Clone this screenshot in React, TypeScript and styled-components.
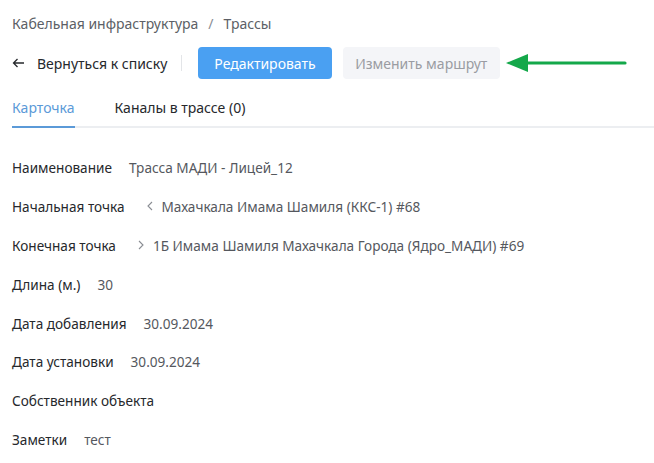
import React from "react";
import styled, { createGlobalStyle } from "styled-components";

const GlobalStyle = createGlobalStyle`
  html, body {
    margin: 0;
    padding: 0;
    background: #ffffff;
    font-family: "Noto Sans", "Open Sans", sans-serif;
  }
`;

const Page = styled.div`
  width: 654px;
  height: 463px;
  overflow: hidden;
  padding: 0 0 0 12px;
  box-sizing: border-box;
`;

const Breadcrumbs = styled.div`
  display: flex;
  align-items: center;
  gap: 10px;
  height: 47px;
  font-size: 14px;
  color: #5c5f66;
`;

const Slash = styled.span`
  color: #8a8d93;
`;

const Toolbar = styled.div`
  display: flex;
  align-items: center;
  height: 32px;
`;

const BackLink = styled.button`
  display: flex;
  align-items: center;
  gap: 12px;
  border: 0;
  background: none;
  padding: 0;
  font: inherit;
  font-size: 14px;
  color: #26282c;
  cursor: pointer;
`;

const Divider = styled.span`
  width: 1px;
  height: 16px;
  background: #e3e5e8;
  margin: 0 16px 0 14px;
`;

const Button = styled.button<{ $primary?: boolean }>`
  height: 32px;
  border: 0;
  border-radius: 4px;
  padding: 0 ${(p) => (p.$primary ? 16 : 12.5)}px;
  font: inherit;
  font-size: 14px;
  margin-right: ${(p) => (p.$primary ? 11 : 12)}px;
  background: ${(p) => (p.$primary ? "#4aa0f2" : "#f4f5f8")};
  color: ${(p) => (p.$primary ? "#ffffff" : "#9a9ca2")};
`;

const Pointer = styled.svg`
  display: block;
  margin-left: -6px;
`;

const Tabs = styled.div`
  display: flex;
  gap: 40px;
  margin-top: 16px;
  border-bottom: 2px solid #eceef1;
`;

const Tab = styled.div<{ $active?: boolean }>`
  font-size: 14px;
  padding: 3px 0 9px;
  margin-bottom: -2px;
  color: ${(p) => (p.$active ? "#5b9ad8" : "#26282c")};
  border-bottom: 2px solid ${(p) => (p.$active ? "#5b9ad8" : "transparent")};
`;

const Fields = styled.div`
  display: flex;
  flex-direction: column;
  padding-top: 20px;
`;

const Row = styled.div`
  display: flex;
  align-items: center;
  gap: 17px;
  height: 38.9px;
  font-size: 13.6px;
`;

const Label = styled.span`
  color: #26282c;
`;

const Value = styled.span`
  display: flex;
  align-items: center;
  gap: 9px;
  color: #55585e;
`;

const Chevron = styled.svg`
  display: block;
  margin-left: 5px;
`;

const fields: { label: string; value?: string; chevron?: "left" | "right" }[] = [
  { label: "Наименование", value: "Трасса МАДИ - Лицей_12" },
  { label: "Начальная точка", value: "Махачкала Имама Шамиля (ККС-1) #68", chevron: "left" },
  { label: "Конечная точка", value: "1Б Имама Шамиля Махачкала Города (Ядро_МАДИ) #69", chevron: "right" },
  { label: "Длина (м.)", value: "30" },
  { label: "Дата добавления", value: "30.09.2024" },
  { label: "Дата установки", value: "30.09.2024" },
  { label: "Собственник объекта" },
  { label: "Заметки", value: "тест" },
];

const App = () => (
  <Page>
    <GlobalStyle />
    <Breadcrumbs>
      <span>Кабельная инфраструктура</span>
      <Slash>/</Slash>
      <span>Трассы</span>
    </Breadcrumbs>
    <Toolbar>
      <BackLink>
        <svg width="13" height="10" viewBox="0 0 13 10" fill="none">
          <path d="M12 5H1.5M5.5 1L1.5 5l4 4" stroke="#26282c" strokeWidth="1.3" />
        </svg>
        Вернуться к списку
      </BackLink>
      <Divider />
      <Button $primary>Редактировать</Button>
      <Button>Изменить маршрут</Button>
      <Pointer width="124" height="20" viewBox="0 0 124 20">
        <path d="M22 10H119" stroke="#14a84a" strokeWidth="3.2" strokeLinecap="round" />
        <path d="M0 10L22 1V19Z" fill="#14a84a" />
      </Pointer>
    </Toolbar>
    <Tabs>
      <Tab $active>Карточка</Tab>
      <Tab>Каналы в трассе (0)</Tab>
    </Tabs>
    <Fields>
      {fields.map((f) => (
        <Row key={f.label}>
          <Label>{f.label}</Label>
          {(f.value || f.chevron) && (
            <Value>
              {f.chevron && (
                <Chevron width="6" height="10" viewBox="0 0 6 10" fill="none">
                  <path
                    d={f.chevron === "left" ? "M5 1L1 5l4 4" : "M1 1l4 4-4 4"}
                    stroke="#8a8d93"
                    strokeWidth="1.1"
                  />
                </Chevron>
              )}
              {f.value}
            </Value>
          )}
        </Row>
      ))}
    </Fields>
  </Page>
);

export default App;
